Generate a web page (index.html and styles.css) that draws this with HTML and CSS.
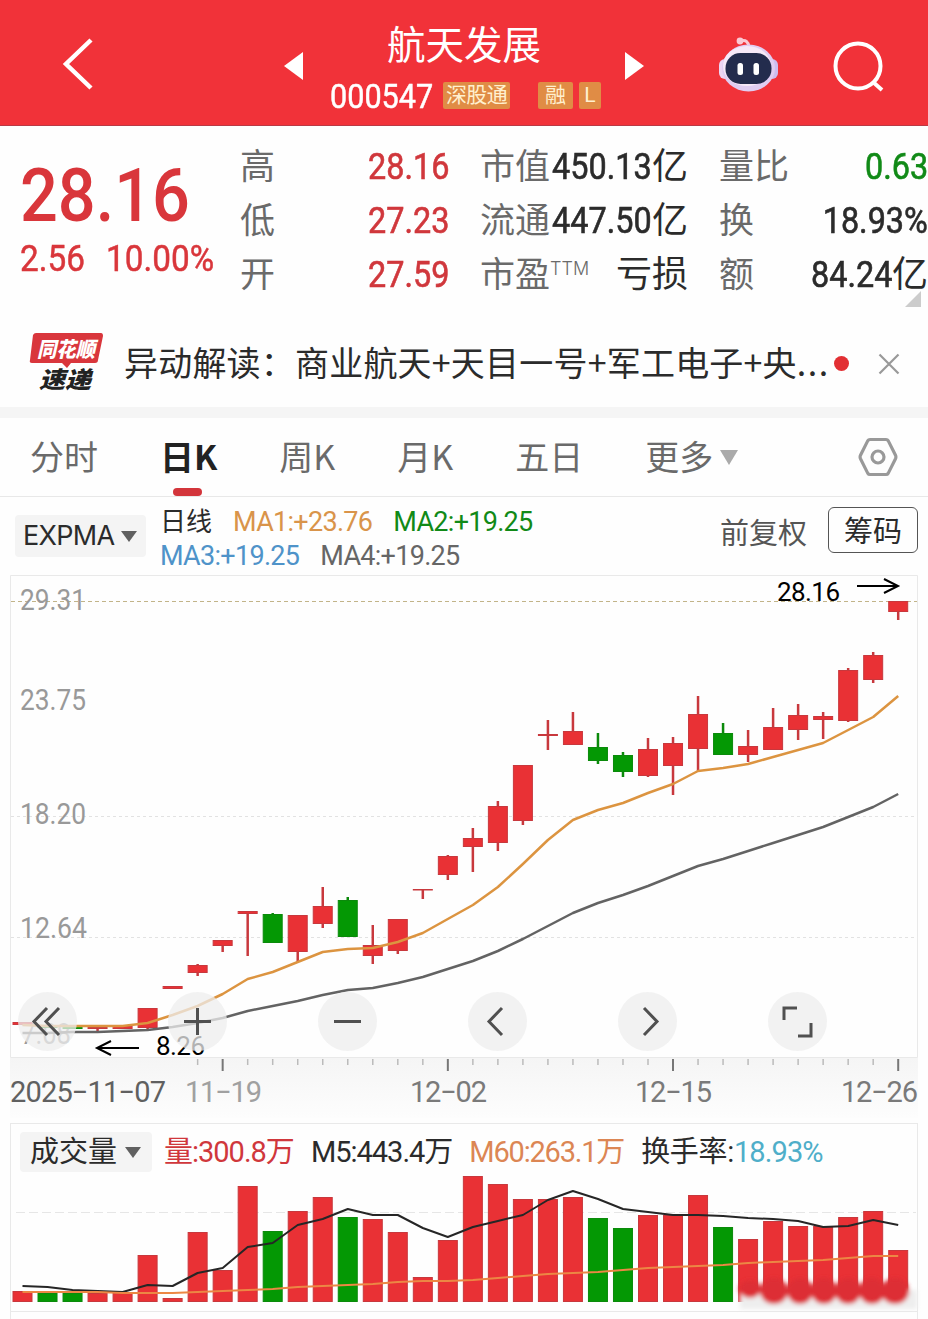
FILE: index.html
```html
<!DOCTYPE html>
<html lang="zh-CN">
<head>
    <meta charset="UTF-8">
    <meta name="viewport" content="width=device-width, initial-scale=1.0">
    <title>航天发展 000547</title>
    <link rel="stylesheet" href="styles.css">
    <script src="chart.js" defer></script>
</head>
<body>
    <header class="header">
        <svg class="back" width="32" height="54" viewBox="0 0 32 54"><path d="M29 3L4 27l25 24"/></svg>
        <svg class="prev" width="20" height="28" viewBox="0 0 20 28"><path d="M0 14L19 0v28z"/></svg>
        <div class="stock">
            <h1>航天发展</h1>
            <div class="stock-info">
                <span class="code"><span class="num">000547</span></span>
                <span class="tag tag-wide">深股通</span>
                <span class="tag tag-rong">融</span>
                <span class="tag tag-l">L</span>
            </div>
        </div>
        <svg class="next" width="20" height="28" viewBox="0 0 20 28"><path d="M1 0l19 14L1 28z"/></svg>
        <svg class="robot" width="60" height="56" viewBox="0 0 60 56">
            <path d="M22 4q7-2 8 6" fill="none" stroke="#fbc9d4" stroke-width="3"/>
            <circle cx="21" cy="4" r="3.4" fill="#fbc9d4"/>
            <rect x="0" y="22" width="12" height="20" rx="6" fill="#ecd5f2"/>
            <rect x="47" y="22" width="12" height="20" rx="6" fill="#cdbdf0"/>
            <ellipse cx="29.500" cy="31" rx="26.500" ry="23.500" fill="#e0cdf2"/>
            <ellipse cx="28" cy="29" rx="24" ry="20" fill="#f6e9f8"/>
            <rect x="6.500" y="16" width="46" height="31" rx="15" fill="#232c4d"/>
            <rect x="18.500" y="26" width="5.500" height="12" rx="2.500" fill="#fff"/>
            <rect x="34.500" y="26" width="5.500" height="12" rx="2.500" fill="#fff"/>
        </svg>
        <svg class="search" width="52" height="52" viewBox="0 0 52 52"><circle cx="25" cy="25" r="22.500"/><path d="M40 41l9 8"/></svg>
    </header>

    <section class="quote">
        <div class="price">
            <div class="price-now"><span class="num">28.16</span></div>
            <div class="price-change">
                <span class="change"><span class="num">2.56</span></span>
                <span class="num">10.00%</span>
            </div>
        </div>
        <div class="stats">
            <div class="stat"><label>高</label><b class="red"><span class="num">28.16</span></b></div>
            <div class="stat"><label>低</label><b class="red"><span class="num">27.23</span></b></div>
            <div class="stat"><label>开</label><b class="red"><span class="num">27.59</span></b></div>
        </div>
        <div class="stats">
            <div class="stat"><label>市值</label><b><span class="num">450.13</span>亿</b></div>
            <div class="stat"><label>流通</label><b><span class="num">447.50</span>亿</b></div>
            <div class="stat"><label>市盈<sup>TTM</sup></label><b class="loss">亏损</b></div>
        </div>
        <div class="stats">
            <div class="stat"><label>量比</label><b class="green"><span class="num">0.63</span></b></div>
            <div class="stat"><label>换</label><b><span class="num">18.93%</span></b></div>
            <div class="stat"><label>额</label><b><span class="num">84.24</span>亿</b></div>
        </div>
        <i class="corner"></i>
    </section>

    <section class="news">
        <svg class="news-logo" width="76" height="64" viewBox="0 0 76 64">
            <path d="M7 1h65q2 0 2 3l-5 24q0 3-3 3H42l-4 5-5-5H3q-3 0-2-3L4 3q1-2 3-2z" fill="#d9363c"/>
            <text x="8" y="25" textLength="58" lengthAdjust="spacingAndGlyphs" class="logo-top">同花顺</text>
            <text x="10" y="56" textLength="52" lengthAdjust="spacingAndGlyphs" class="logo-bottom">速递</text>
        </svg>
        <p>异动解读：商业航天+天目一号+军工电子+央<span class="dots">...</span></p>
        <i class="dot"></i>
        <svg class="close" width="22" height="22" viewBox="0 0 22 22"><path d="M1.500 1.500l19 19M20.500 1.500l-19 19"/></svg>
    </section>

    <nav class="tabs">
        <span>分时</span>
        <span class="active">日K</span>
        <span>周K</span>
        <span>月K</span>
        <span>五日</span>
        <span class="more">更多<i class="arrow"></i></span>
        <svg class="setting" width="40" height="40" viewBox="0 0 40 40">
            <path d="M12 2.500h16q1.500 0 2.300 1.400l7.200 14.300q.8 1.800 0 3.500l-7.200 14.400q-.8 1.400-2.300 1.400H12q-1.500 0-2.300-1.400L2.500 21.700q-.8-1.700 0-3.500L9.700 3.900Q10.500 2.500 12 2.500z"/>
            <circle cx="20" cy="20" r="6"/>
        </svg>
    </nav>

    <section class="indicator">
        <div class="select">EXPMA<i class="arrow"></i></div>
        <div class="ma">
            <div><span class="ma-name">日线</span><span class="orange">MA1:+23.76</span><span class="green">MA2:+19.25</span></div>
            <div><span class="blue">MA3:+19.25</span><span class="gray">MA4:+19.25</span></div>
        </div>
        <span class="adjust">前复权</span>
        <span class="chips">筹码</span>
    </section>

    <section class="kline">
        <svg id="kline" width="928" height="548" viewBox="0 575 928 548">
            <defs>
                <linearGradient id="fade" x1="0" y1="0" x2="0" y2="1">
                    <stop offset="0" stop-color="#f5f5f5"/>
                    <stop offset="1" stop-color="#fdfdfd"/>
                </linearGradient>
            </defs>
            <rect x="10" y="1058" width="908" height="60" fill="url(#fade)"/>
            <path class="frame" d="M10.500 1057.500v-482h907v482z"/>
            <path class="limit" d="M11 601.500h906"/>
            <path class="grid" d="M11 816.500h906M11 937.500h906"/>
            <g class="axis">
                <text x="20" y="610" textLength="66" lengthAdjust="spacingAndGlyphs">29.31</text>
                <text x="20" y="710" textLength="66" lengthAdjust="spacingAndGlyphs">23.75</text>
                <text x="20" y="824" textLength="66" lengthAdjust="spacingAndGlyphs">18.20</text>
                <text x="20" y="938" textLength="67" lengthAdjust="spacingAndGlyphs">12.64</text>
                <text x="21" y="1044" textLength="50" lengthAdjust="spacingAndGlyphs">7.08</text>
            </g>
            <g class="candles"></g>
            <polyline class="line-ma1"/>
            <polyline class="line-ma4"/>
            <g class="mark">
                <text x="777" y="601" textLength="63">28.16</text>
                <path d="M857 586h40M884 579l14 7-14 7"/>
                <text x="156" y="1055" textLength="49">8.26</text>
                <path d="M139 1048H98M111 1041l-14 7 14 7"/>
            </g>
            <g class="ticks"></g>
            <g class="dates">
                <text class="dark" x="10" y="1102" textLength="156">2025−11−07</text>
                <text class="light" x="185" y="1102" textLength="77">11−19</text>
                <text x="410" y="1102" textLength="77">12−02</text>
                <text x="635" y="1102" textLength="77">12−15</text>
                <text x="841" y="1102" textLength="77">12−26</text>
            </g>
        </svg>
        <div class="tools">
            <svg viewBox="0 0 59 59"><path d="M29 16L16 29.500 29 43M41 16L28 29.500 41 43"/></svg>
            <svg viewBox="0 0 59 59"><path d="M16 29.500h27M29.500 16v27"/></svg>
            <svg viewBox="0 0 59 59"><path d="M16 29.500h27"/></svg>
            <svg viewBox="0 0 59 59"><path d="M34 16L21 29.500 34 43"/></svg>
            <svg viewBox="0 0 59 59"><path d="M26 16l13 13.500L26 43"/></svg>
            <svg viewBox="0 0 59 59"><path d="M16 28V16h13M43 31v13H30"/></svg>
        </div>
    </section>

    <section class="volume">
        <div class="volume-head">
            <div class="select">成交量<i class="arrow"></i></div>
            <span class="red">量:300.8万</span>
            <span>M5:443.4万</span>
            <span class="m60">M60:263.1万</span>
            <span class="rate">换手率:<em>18.93%</em></span>
        </div>
        <svg id="volume" width="928" height="146" viewBox="0 1173 928 146">
            <defs>
                <filter id="smudge" x="-10%" y="-50%" width="120%" height="200%"><feGaussianBlur stdDeviation="2"/></filter>
            </defs>
            <path class="vol-grid" d="M16 1212.500h900"/>
            <g class="bars"></g>
            <path class="frame" d="M10 1311.500h908M10.500 1173v146M917.500 1173v146"/>
            <polyline class="line-m5"/>
            <polyline class="line-m60"/>
            <g class="smudge" filter="url(#smudge)">
                <path d="M740 1290h177v19H740z" fill="#eee"/>
                <ellipse cx="750" cy="1289" rx="11" ry="9"/>
                <ellipse cx="774" cy="1291" rx="14" ry="13"/>
                <ellipse cx="800" cy="1291" rx="13" ry="13"/>
                <ellipse cx="824" cy="1291" rx="13" ry="13"/>
                <ellipse cx="848" cy="1291" rx="13" ry="13"/>
                <ellipse cx="872" cy="1291" rx="13" ry="13"/>
                <ellipse cx="895" cy="1291" rx="14" ry="13"/>
            </g>
        </svg>
    </section>
</body>
</html>
```
FILE: styles.css
```css
* {
    margin: 0;
    padding: 0;
    box-sizing: border-box;
}
body {
    width: 928px;
    height: 1319px;
    overflow: hidden;
    background: #fefefe;
    color: #2b2b2b;
    font-family: Roboto, "Noto Sans CJK SC", sans-serif;
}
svg {
    display: block;
    flex: none;
}
i, em, b, label {
    font-style: normal;
    font-weight: 400;
}
.red { color: #d0373c; }
.green { color: #118a17; }
.orange { color: #d9944a; }
.blue { color: #4f93c9; }
.gray { color: #666; }

/* narrow digits */
.num {
    display: inline-block;
    transform: scaleX(.9);
    transform-origin: right;
}

/* header */
.header {
    height: 126px;
    background: #f13239;
    border-bottom: 1px solid #b93a45;
    color: #fff;
    display: flex;
    padding-left: 62px;
}
.back {
    margin-top: 37px;
    fill: none;
    stroke: #fff;
    stroke-width: 4.5;
}
.prev {
    margin: 52px 0 0 190px;
    fill: #fff;
}
.stock {
    width: 271px;
    margin-left: 26px;
    padding-top: 19px;
}
.stock h1 {
    font: 400 38.500px/46px "Noto Sans CJK SC", sans-serif;
    padding-left: 57px;
}
.stock-info {
    display: flex;
    padding-top: 17px;
}
.code {
    width: 113px;
    height: 28px;
    font-size: 34px;
    line-height: 29px;
}
.code .num {
    transform-origin: left;
    -webkit-text-stroke: .5px;
}
.tag {
    height: 27px;
    background: #e08c45;
    color: #fff0cf;
    font-size: 21px;
    line-height: 27px;
    text-align: center;
    border-radius: 2px;
}
.tag-wide {
    width: 67px;
    margin-right: 28px;
    letter-spacing: -.7px;
}
.tag-rong {
    width: 35px;
    margin-right: 6px;
}
.tag-l { width: 22px; }
.next {
    margin: 52px 0 0 23px;
    fill: #fff;
}
.robot { margin: 37px 0 0 75px; }
.search {
    margin: 41px 0 0 54px;
    fill: none;
    stroke: #fff;
    stroke-width: 4;
}

/* quote */
.quote {
    height: 194px;
    display: flex;
    position: relative;
}
.price {
    width: 240px;
    color: #d9363b;
    padding: 33px 0 0 20px;
}
.price .num { transform-origin: left; }
.price-now {
    font-size: 74px;
    font-weight: 500;
    line-height: 74px;
    height: 75px;
}
.price-now .num { transform: scaleX(.9); }
.price-change {
    font-size: 37px;
    line-height: 49px;
    display: flex;
    -webkit-text-stroke: .5px;
}
.change { width: 86px; }
.stats {
    width: 209px;
    padding-top: 14px;
    margin-right: 31px;
}
.stats:nth-child(3) { width: 208px; }
.stats:nth-child(4) {
    width: 209px;
    margin-right: 0;
}
.stat {
    height: 54px;
    display: flex;
    justify-content: space-between;
    line-height: 54px;
}
.stat label {
    font-family: "Noto Sans CJK SC", sans-serif;
    font-size: 35px;
    color: #6a6a6a;
    white-space: nowrap;
    margin-top: -3px;
}
.stat sup {
    font: 300 18px/18px Inter, sans-serif;
    vertical-align: 12px;
}
.stat b {
    font-size: 36px;
    text-align: right;
    white-space: nowrap;
    /* long values reach back over the label's spare room */
    margin-left: -30px;
}
.stat b .num { -webkit-text-stroke: .6px; }
.corner {
    position: absolute;
    right: 7px;
    bottom: 13px;
    border: 8px solid #ccc;
    border-top-color: transparent;
    border-left-color: transparent;
}

/* news */
.news {
    height: 98px;
    border-bottom: 11px solid #f5f5f5;
    display: flex;
    align-items: center;
    padding-left: 29px;
}
.logo-top, .logo-bottom {
    font: italic 900 21px "Noto Sans CJK SC", sans-serif;
    fill: #fff;
}
.logo-bottom {
    font-size: 23px;
    fill: #222;
}
.news p {
    width: 706px;
    margin: -3px 0 0 19px;
    font: 400 34px/50px "Noto Sans CJK SC", sans-serif;
    letter-spacing: .2px;
    white-space: nowrap;
}
.dots { letter-spacing: 1.5px; }
.dot {
    width: 15px;
    height: 15px;
    border-radius: 50%;
    background: #e22f33;
    margin-left: 4px;
}
.close {
    margin-left: 29px;
    fill: none;
    stroke: #999;
    stroke-width: 2.2;
}

/* tabs */
.tabs {
    height: 79px;
    border-bottom: 1px solid #e8e8e8;
    display: flex;
    gap: 62px;
    padding-left: 30px;
    font: 400 34px/75px "Noto Sans CJK SC", sans-serif;
    color: #6a6a6a;
}
.tabs .active {
    font-weight: 700;
    color: #222;
    position: relative;
}
.active::after {
    content: "";
    position: absolute;
    left: 13px;
    bottom: 0;
    width: 29px;
    height: 8px;
    border-radius: 4px;
    background: #d3353b;
}
.arrow {
    display: inline-block;
    border: 8px solid transparent;
    border-top: 11px solid #606060;
    border-bottom: 0;
}
.more { white-space: nowrap; }
.more .arrow {
    border-width: 15px 9px 0;
    border-top-color: #aaa;
    margin-left: 7px;
    vertical-align: 5px;
}
.setting {
    margin: 19px 0 0 58px;
    fill: none;
    stroke: #999;
    stroke-width: 3.2;
}

/* indicator */
.indicator {
    height: 78px;
    display: flex;
    padding-left: 15px;
}
.select {
    background: #f4f4f4;
    border-radius: 4px;
    display: flex;
    align-items: center;
}
.indicator .select {
    width: 131px;
    height: 42px;
    margin-top: 18px;
    padding-left: 8px;
    font: 400 27px/42px Inter, sans-serif;
    letter-spacing: -.7px;
    justify-content: space-between;
    padding-right: 9px;
}
.ma {
    width: 574px;
    padding: 8px 0 0 14px;
    font-size: 27px;
    letter-spacing: -.7px;
    line-height: 34px;
}
.ma div {
    height: 34px;
    display: flex;
    gap: 21px;
}
.ma .ma-name {
    font-size: 26px;
    letter-spacing: 0;
}
.adjust {
    width: 108px;
    font: 400 29px/68px "Noto Sans CJK SC", sans-serif;
    color: #555;
}
.chips {
    width: 90px;
    height: 46px;
    margin-top: 10px;
    border: 1.500px solid #555;
    border-radius: 6px;
    font: 400 29px/43px "Noto Sans CJK SC", sans-serif;
    text-align: center;
}

/* k line */
.kline {
    height: 548px;
    position: relative;
}
.frame {
    fill: none;
    stroke: #e9e9e9;
}
.limit {
    stroke: #c2b489;
    stroke-dasharray: 4 3;
}
.grid {
    stroke: #e2e2e2;
    stroke-dasharray: 3 3;
}
.axis, .dates, .mark text {
    font-size: 29px;
    fill: #999;
}
.kline text { font-family: Roboto, sans-serif; }
.dates { fill: #7a7a7a; }
.dates .dark { fill: #606060; }
.dates .light { fill: #a0a0a0; }
.mark text {
    font-size: 26px;
    fill: #000;
}
.mark path {
    fill: none;
    stroke: #000;
    stroke-width: 2;
}
.up { fill: #e93135; stroke: #c8383d; }
.down { fill: #049804; stroke: #0b8a0b; }
.wick { stroke-width: 2.5; }
polyline {
    fill: none;
    stroke-width: 2.5;
    stroke-linejoin: round;
}
.line-ma1 { stroke: #dc9440; }
.line-ma4 { stroke: #636363; }
.line-m5 { stroke: #262626; stroke-width: 2; }
.line-m60 { stroke: #ec8744; stroke-width: 2; }
.ticks { stroke: #bbb; stroke-width: 1.5; }
.ticks .major { stroke: #777; stroke-width: 2; }

.tools {
    position: absolute;
    left: 18px;
    top: 417px;
    display: flex;
    gap: 91px;
}
.tools svg {
    width: 59px;
    height: 59px;
    border-radius: 50%;
    background: rgba(238, 238, 238, .75);
    fill: none;
    stroke: #505050;
    stroke-width: 3;
}

/* volume */
.volume { height: 196px; }
.volume-head {
    height: 50px;
    margin: 0 10px;
    width: 908px;
    border: 1px solid #e9e9e9;
    border-bottom: 0;
    display: flex;
    gap: 17px;
    padding: 8px 0 0 9px;
    font-size: 29px;
    line-height: 41px;
    letter-spacing: -1px;
    white-space: nowrap;
}
.volume-head .select {
    width: 132px;
    height: 40px;
    margin-right: -5px;
    padding: 0 11px 0 10px;
    justify-content: space-between;
    letter-spacing: 0;
}
.m60 {
    color: #dc8654;
    letter-spacing: -1.2px;
}
.rate { letter-spacing: -.3px; }
.rate em {
    color: #4faec9;
    letter-spacing: -.9px;
}
.vol-grid {
    stroke: #e6e6e6;
    stroke-dasharray: 9 4;
}
.smudge { fill: #dd2d35; }
```
FILE: chart.js
```js
const svgNS = 'http://www.w3.org/2000/svg';
const left = 22.5;
const step = 25.02;
const green = [1, 2, 10, 13, 23, 24, 28];

// body top, body bottom, high, low
const candles = [
    [1022, 1025, 1022, 1025], [1026, 1028, 1026, 1028], [1026, 1029, 1026, 1029],
    [1027, 1029, 1027, 1031], [1026, 1029, 1026, 1029], [1008, 1028, 1008, 1030],
    [986, 989, 986, 989], [965, 973, 964, 976], [940, 946, 940, 952],
    [911, 914, 911, 956], [914, 943, 913, 943], [915, 952, 915, 962],
    [906, 924, 887, 928], [900, 937, 897, 937], [945, 956, 925, 964],
    [919, 951, 919, 954], [889, 890, 889, 899], [856, 875, 855, 880],
    [838, 847, 828, 872], [806, 843, 801, 851], [765, 821, 765, 825],
    [734, 736, 720, 750], [731, 745, 712, 745], [747, 761, 733, 764],
    [755, 772, 752, 777], [749, 776, 738, 777], [743, 766, 737, 795],
    [714, 749, 696, 771], [733, 755, 723, 755], [746, 755, 730, 762],
    [727, 750, 708, 750], [715, 730, 704, 740], [716, 720, 712, 739],
    [670, 721, 668, 722], [655, 680, 652, 683], [601, 612, 601, 620]
];
const ma1 = [1025, 1026, 1026, 1026, 1026, 1023, 1015, 1006, 994, 979, 972, 962, 952, 949, 948, 942, 933, 919,
    905, 887, 864, 840, 820, 810, 803, 793, 784, 771, 768, 764, 757, 750, 743, 730, 717, 696];
const ma4 = [1033, 1033, 1032, 1032, 1031, 1030, 1027, 1023, 1018, 1011, 1006, 1001, 995, 990, 988, 983, 977, 969,
    961, 951, 939, 926, 913, 903, 895, 886, 876, 866, 859, 851, 843, 835, 827, 817, 807, 794];

const volumes = [1291, 1293, 1293, 1293, 1293, 1255, 1298, 1232, 1270, 1186, 1231, 1211, 1197, 1217, 1219, 1232, 1277, 1240,
    1176, 1184, 1199, 1199, 1197, 1218, 1228, 1215, 1215, 1195, 1227, 1239, 1221, 1226, 1226, 1217, 1211, 1250];
const m5 = [1286, 1287, 1290, 1291, 1292, 1285, 1286, 1273, 1268, 1247, 1243, 1225, 1219, 1209, 1215, 1215, 1228, 1237,
    1227, 1221, 1215, 1200, 1191, 1199, 1209, 1212, 1215, 1215, 1216, 1218, 1219, 1221, 1227, 1226, 1220, 1225];
const m60 = [1292, 1292, 1292, 1292, 1293, 1293, 1293, 1292, 1291, 1290, 1289, 1287, 1286, 1285, 1284, 1282, 1281, 1281,
    1280, 1278, 1276, 1274, 1273, 1272, 1270, 1268, 1267, 1266, 1265, 1263, 1262, 1261, 1260, 1258, 1256, 1256];

function add(parent, name, attrs) {
    const el = document.createElementNS(svgNS, name);
    for (const key in attrs) {
        el.setAttribute(key, attrs[key]);
    }
    document.querySelector(parent).appendChild(el);
}

function drawLine(selector, data) {
    const points = data.map((y, i) => `${(left + i * step).toFixed(1)},${y}`);
    document.querySelector(selector).setAttribute('points', points.join(' '));
}

candles.forEach(([top, bottom, high, low], i) => {
    const x = left + i * step;
    const color = green.includes(i) ? 'down' : 'up';
    add('.candles', 'line', { x1: x, x2: x, y1: high, y2: low, class: `wick ${color}` });
    add('.candles', 'rect', { x: x - 9.5, y: top + .5, width: 19, height: Math.max(bottom - top - 1, .5), class: color });
});

volumes.forEach((top, i) => {
    const x = left + i * step;
    add('.bars', 'rect', { x: x - 9.5, y: top + .5, width: 19, height: 1301 - top, class: green.includes(i) ? 'down' : 'up' });
});

for (let i = 7; i < 36; i++) {
    const x = left + i * step;
    const major = i % 9 === 8;
    add('.ticks', 'line', { x1: x, x2: x, y1: 1059, y2: major ? 1071 : 1065, class: major ? 'major' : '' });
}

drawLine('.line-ma1', ma1);
drawLine('.line-ma4', ma4);
drawLine('.line-m5', m5);
drawLine('.line-m60', m60);
```
